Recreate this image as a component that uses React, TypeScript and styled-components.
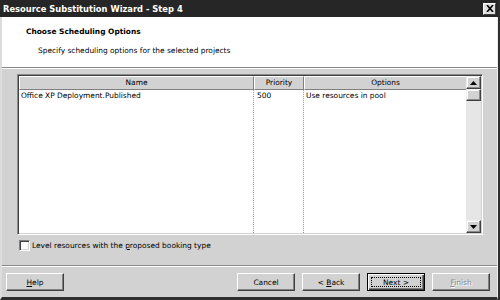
import React from 'react';
import styled, { createGlobalStyle } from 'styled-components';

const FONT = `"DejaVu Sans", "Liberation Sans", sans-serif`;

const Global = createGlobalStyle`
  html, body { margin: 0; padding: 0; background: #ffffff; }
  body { width: 500px; height: 300px; overflow: hidden; }
`;

const Window = styled.div`
  box-sizing: border-box;
  width: 500px;
  height: 300px;
  display: flex;
  flex-direction: column;
  border-right: 2px solid #2e2e2e;
  background: #d2d2d2;
  font-family: ${FONT};
  font-size: 7.45px;
  color: #000;
`;

const TitleBar = styled.div`
  height: 17px;
  flex: none;
  display: flex;
  align-items: center;
  justify-content: space-between;
  background: #262626;
  padding: 0 2px 0 3px;
`;

const TitleText = styled.span`
  color: #ffffff;
  font-weight: bold;
  font-size: 8.35px;
`;

const CloseBox = styled.div`
  box-sizing: border-box;
  width: 13px;
  height: 12px;
  background: #e0e0e0;
  border: 1px solid;
  border-color: #ffffff #404040 #404040 #ffffff;
  display: flex;
  align-items: center;
  justify-content: center;
`;

const Frame = styled.div`
  flex: 1;
  display: flex;
  flex-direction: column;
  border-left: 2px solid #dcdcdc;
  border-right: 1px solid #ececec;
  border-bottom: 3px solid #2e2e2e;
`;

const Header = styled.div`
  height: 50px;
  flex: none;
  box-sizing: border-box;
  background: #ffffff;
  padding: 9px 0 0 24px;
`;

const HeaderTitle = styled.div`
  font-weight: bold;
  line-height: 11px;
`;

const HeaderSub = styled.div`
  line-height: 11px;
  margin: 8px 0 0 12px;
`;

const Etched = styled.div`
  height: 1px;
  flex: none;
  background: #8a8a8a;
  border-bottom: 1px solid #ffffff;
`;

const Body = styled.div`
  flex: 1;
  display: flex;
  flex-direction: column;
  padding: 5px 0 0 15px;
`;

const ListBox = styled.div`
  box-sizing: border-box;
  width: 466px;
  height: 161px;
  border: 1px solid;
  border-color: #8a8a8a #ffffff #ffffff #8a8a8a;
  box-shadow: inset 1px 1px 0 #404040, inset -1px -1px 0 #d2d2d2;
  padding: 1px;
  display: flex;
  background: #ffffff;
`;

const Columns = styled.div`
  flex: 1;
  display: flex;
`;

const Column = styled.div<{ $w: number; $last?: boolean }>`
  width: ${(p) => p.$w}px;
  flex: none;
  display: flex;
  flex-direction: column;
  border-right: ${(p) => (p.$last ? 'none' : '1px dotted #9a9a9a')};
  box-sizing: border-box;
`;

const HeadCell = styled.div`
  box-sizing: border-box;
  height: 14px;
  background: #d2d2d2;
  border: 1px solid;
  border-color: #ffffff #808080 #808080 #ffffff;
  text-align: center;
  line-height: 12px;
  margin-right: -1px;
`;

const Cell = styled.div<{ $pad: number }>`
  height: 12px;
  line-height: 12px;
  padding-left: ${(p) => p.$pad}px;
  white-space: nowrap;
`;

const ScrollBar = styled.div`
  width: 15px;
  flex: none;
  display: flex;
  flex-direction: column;
  background: #e6e6e6;
`;

const ScrollBtn = styled.div<{ $h: number }>`
  box-sizing: border-box;
  height: ${(p) => p.$h}px;
  background: #d2d2d2;
  border: 1px solid;
  border-color: #eeeeee #404040 #404040 #eeeeee;
  box-shadow: inset -1px -1px 0 #8a8a8a, inset 1px 1px 0 #ffffff;
  display: flex;
  align-items: center;
  justify-content: center;
  flex: none;
`;

const Track = styled.div`
  flex: 1;
`;

const CheckRow = styled.div`
  display: flex;
  align-items: center;
  margin: 5px 0 0 2px;
  height: 11px;
  gap: 2px;
`;

const CheckBox = styled.div`
  box-sizing: border-box;
  width: 11px;
  height: 11px;
  background: #ffffff;
  border: 1px solid;
  border-color: #808080 #ffffff #ffffff #808080;
  box-shadow: inset 1px 1px 0 #404040, inset -1px -1px 0 #d2d2d2;
`;

const Separator = styled.div`
  margin: 14px 0 0 -15px;
  height: 1px;
  background: #8a8a8a;
  border-bottom: 1px solid #ffffff;
`;

const ButtonRow = styled.div`
  display: flex;
  margin: 6px 0 0 -11px;
  padding-right: 7px;
`;

const Spacer = styled.div`
  flex: 1;
`;

const Button = styled.div<{ $default?: boolean; $disabled?: boolean }>`
  box-sizing: border-box;
  width: 58px;
  height: 18px;
  margin-left: 7px;
  display: flex;
  align-items: center;
  justify-content: center;
  position: relative;
  border: 1px solid;
  border-color: ${(p) => (p.$default ? '#000000' : '#ffffff #404040 #404040 #ffffff')};
  box-shadow: ${(p) =>
    p.$default
      ? 'inset 1px 1px 0 #ffffff, inset -1px -1px 0 #404040, inset -2px -2px 0 #808080'
      : 'inset -1px -1px 0 #808080'};
  color: ${(p) => (p.$disabled ? '#8a8a8a' : '#000000')};
  text-shadow: ${(p) => (p.$disabled ? '1px 1px 0 #ffffff' : 'none')};
  &:first-child { margin-left: 0; }
`;

const Focus = styled.div`
  position: absolute;
  inset: 3px;
  border: 1px dotted #000;
`;

export default function App() {
  return (
    <>
      <Global />
      <Window>
        <TitleBar>
          <TitleText>Resource Substitution Wizard - Step 4</TitleText>
          <CloseBox>
            <svg width="8" height="7" viewBox="0 0 8 7">
              <path d="M1 0 L7 7 M7 0 L1 7" stroke="#000" strokeWidth="1.6" />
            </svg>
          </CloseBox>
        </TitleBar>
        <Frame>
          <Header>
            <HeaderTitle>Choose Scheduling Options</HeaderTitle>
            <HeaderSub>Specify scheduling options for the selected projects</HeaderSub>
          </Header>
          <Etched />
          <Body>
            <ListBox>
              <Columns>
                <Column $w={235}>
                  <HeadCell>Name</HeadCell>
                  <Cell $pad={2}>Office XP Deployment.Published</Cell>
                </Column>
                <Column $w={50}>
                  <HeadCell>Priority</HeadCell>
                  <Cell $pad={3}>500</Cell>
                </Column>
                <Column $w={162} $last>
                  <HeadCell>Options</HeadCell>
                  <Cell $pad={2}>Use resources in pool</Cell>
                </Column>
              </Columns>
              <ScrollBar>
                <ScrollBtn $h={13}>
                  <svg width="7" height="4" viewBox="0 0 7 4">
                    <path d="M3.5 0 L7 4 L0 4 Z" fill="#000" />
                  </svg>
                </ScrollBtn>
                <ScrollBtn $h={12} />
                <Track />
                <ScrollBtn $h={13}>
                  <svg width="7" height="4" viewBox="0 0 7 4">
                    <path d="M0 0 L7 0 L3.5 4 Z" fill="#000" />
                  </svg>
                </ScrollBtn>
              </ScrollBar>
            </ListBox>
            <CheckRow>
              <CheckBox />
              <span>
                Level resources with the <u>p</u>roposed booking type
              </span>
            </CheckRow>
            <Separator />
            <ButtonRow>
              <Button>
                <span>
                  <u>H</u>elp
                </span>
              </Button>
              <Spacer />
              <Button>Cancel</Button>
              <Button>
                <span>
                  &lt; <u>B</u>ack
                </span>
              </Button>
              <Button $default>
                <Focus />
                <span>Next &gt;</span>
              </Button>
              <Button $disabled>
                <span>
                  <u>F</u>inish
                </span>
              </Button>
            </ButtonRow>
          </Body>
        </Frame>
      </Window>
    </>
  );
}
